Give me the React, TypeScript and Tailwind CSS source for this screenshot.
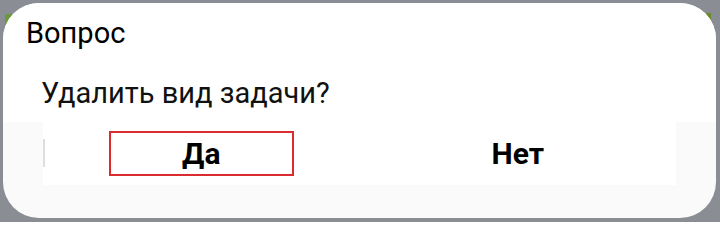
export default function App() {
  return (
    <div
      className="relative w-[720px] h-[222px] bg-[#8a8d94] pt-[3px] pl-[3px] pr-[4px] pb-[4px] overflow-hidden"
      style={{ fontFamily: "Roboto, 'Liberation Sans', sans-serif" }}
    >
      {/* bits of the screen behind the dialog corners */}
      <div className="absolute left-[5px] top-[14px] w-[7px] h-[11px] bg-[#6b9a3c]" />
      <div className="absolute left-[705px] top-[13px] w-[6px] h-[7px] bg-[#6b8a2c]" />

      <div className="relative h-full w-full rounded-[36px] bg-[#fafafa] overflow-hidden flex flex-col">
        <div className="bg-white h-[119px] shrink-0">
          <div className="pl-[23px] pt-[13px] text-[29px] leading-[34px] text-black">Вопрос</div>
          <div className="pl-[38px] pt-[26px] text-[29px] leading-[34px] text-[#111]">
            Удалить вид задачи?
          </div>
        </div>
        <div className="mx-[40px] h-[63px] bg-white flex items-center relative">
          <div className="absolute left-0 top-[17px] w-[2px] h-[28px] bg-[#dedede]" />
          <div className="flex-1 flex justify-center">
            <button className="w-[185px] h-[45px] border-2 border-[#db2a30] text-[30px] font-bold text-black leading-none">
              Да
            </button>
          </div>
          <div className="flex-1 flex justify-center">
            <button className="h-[45px] text-[30px] font-bold text-black leading-none">
              Нет
            </button>
          </div>
        </div>
      </div>
    </div>
  );
}
